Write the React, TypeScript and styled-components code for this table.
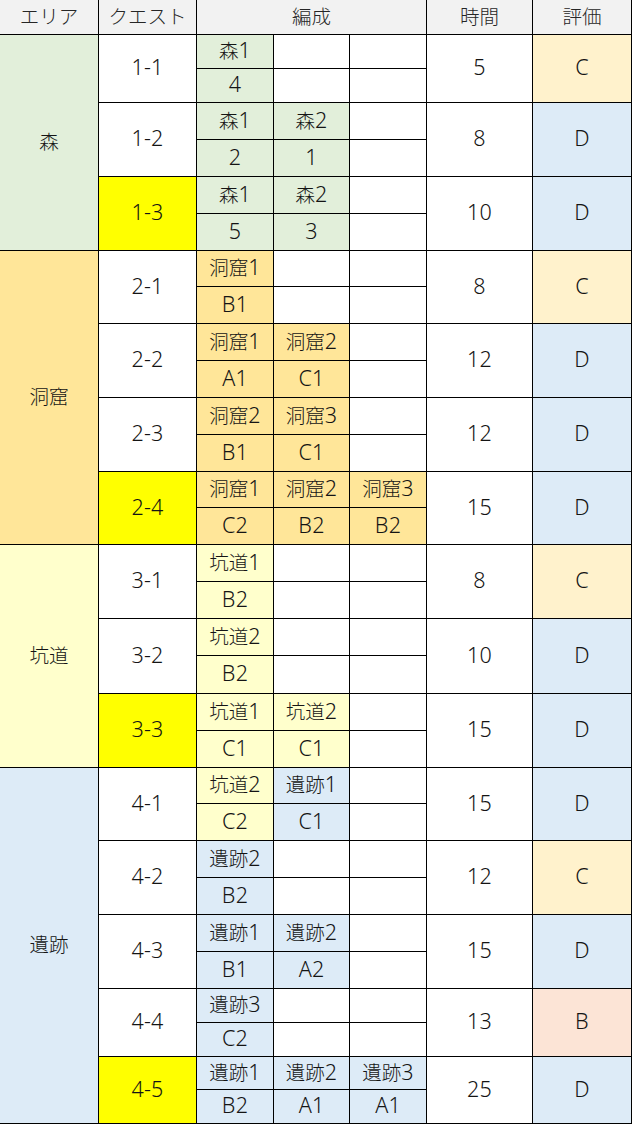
import React from "react";
import styled, { createGlobalStyle } from "styled-components";

const GlobalStyle = createGlobalStyle`
  html, body { margin: 0; padding: 0; background: #ffffff; }
  body { font-family: "Noto Sans CJK JP", "Noto Sans", sans-serif; }
`;

const COLORS = {
  header: "#f2f2f2",
  森: "#e2efda",
  洞窟: "#ffe699",
  坑道: "#ffffcc",
  遺跡: "#ddebf7",
  highlight: "#ffff00",
  white: "#ffffff",
  B: "#fce4d6",
  C: "#fff2cc",
  D: "#ddebf7",
} as const;

type AreaName = "森" | "洞窟" | "坑道" | "遺跡";
type Member = { name: string; value: string };
type Quest = {
  id: string;
  members: Member[];
  time: number;
  rating: "B" | "C" | "D";
  highlight?: boolean;
  heights: [number, number];
};
type Area = { name: AreaName; quests: Quest[] };

const m = (name: string, value: string): Member => ({ name, value });

const AREAS: Area[] = [
  {
    name: "森",
    quests: [
      { id: "1-1", members: [m("森1", "4")], time: 5, rating: "C", heights: [33, 33] },
      { id: "1-2", members: [m("森1", "2"), m("森2", "1")], time: 8, rating: "D", heights: [36, 36] },
      { id: "1-3", members: [m("森1", "5"), m("森2", "3")], time: 10, rating: "D", highlight: true, heights: [36, 36] },
    ],
  },
  {
    name: "洞窟",
    quests: [
      { id: "2-1", members: [m("洞窟1", "B1")], time: 8, rating: "C", heights: [35, 36] },
      { id: "2-2", members: [m("洞窟1", "A1"), m("洞窟2", "C1")], time: 12, rating: "D", heights: [36, 36] },
      { id: "2-3", members: [m("洞窟2", "B1"), m("洞窟3", "C1")], time: 12, rating: "D", heights: [36, 36] },
      {
        id: "2-4",
        members: [m("洞窟1", "C2"), m("洞窟2", "B2"), m("洞窟3", "B2")],
        time: 15,
        rating: "D",
        highlight: true,
        heights: [35, 36],
      },
    ],
  },
  {
    name: "坑道",
    quests: [
      { id: "3-1", members: [m("坑道1", "B2")], time: 8, rating: "C", heights: [36, 36] },
      { id: "3-2", members: [m("坑道2", "B2")], time: 10, rating: "D", heights: [36, 37] },
      { id: "3-3", members: [m("坑道1", "C1"), m("坑道2", "C1")], time: 15, rating: "D", highlight: true, heights: [36, 36] },
    ],
  },
  {
    name: "遺跡",
    quests: [
      { id: "4-1", members: [m("坑道2", "C2"), m("遺跡1", "C1")], time: 15, rating: "D", heights: [35, 36] },
      { id: "4-2", members: [m("遺跡2", "B2")], time: 12, rating: "C", heights: [36, 36] },
      { id: "4-3", members: [m("遺跡1", "B1"), m("遺跡2", "A2")], time: 15, rating: "D", heights: [36, 36] },
      { id: "4-4", members: [m("遺跡3", "C2")], time: 13, rating: "B", heights: [33, 33] },
      {
        id: "4-5",
        members: [m("遺跡1", "B2"), m("遺跡2", "A1"), m("遺跡3", "A1")],
        time: 25,
        rating: "D",
        highlight: true,
        heights: [32, 33],
      },
    ],
  },
];

const AREA_NAMES: AreaName[] = ["森", "洞窟", "坑道", "遺跡"];

const areaColor = (memberName: string): string => {
  const key = AREA_NAMES.find((k) => memberName.startsWith(k));
  return key ? COLORS[key] : COLORS.white;
};

const Sheet = styled.div<{ $rows: string }>`
  display: grid;
  grid-template-columns: 98px 97px 76px 75px 76px 105px 98px;
  grid-template-rows: ${(p) => p.$rows};
  gap: 1px;
  padding: 0 1px 1px 0;
  width: max-content;
  background: #000000;
  font-size: 19.5px;
  font-weight: 300;
  color: #141414;
`;

const Cell = styled.div<{
  $bg: string;
  $row: number;
  $rowSpan?: number;
  $col: number;
  $colSpan?: number;
}>`
  grid-row: ${(p) => p.$row} / span ${(p) => p.$rowSpan ?? 1};
  grid-column: ${(p) => p.$col} / span ${(p) => p.$colSpan ?? 1};
  background: ${(p) => p.$bg};
  display: flex;
  align-items: center;
  justify-content: center;
  padding-bottom: 3px;
  box-sizing: border-box;
  line-height: 1;
  white-space: nowrap;
`;

const HeaderCell = styled(Cell)`
  color: #262626;
`;

const Latin = styled.span`
  font-family: "Noto Sans", "Noto Sans CJK JP", sans-serif;
  font-size: 21.5px;
  font-weight: 300;
  letter-spacing: 0.2px;
`;

const renderText = (s: string): React.ReactNode =>
  s.split(/([A-Za-z0-9\-]+)/).map((part, i) =>
    /^[A-Za-z0-9\-]+$/.test(part) ? <Latin key={i}>{part}</Latin> : part
  );

export default function App() {
  const heights: number[] = [34];
  const cells: React.ReactNode[] = [];

  const headers: { label: string; col: number; span?: number }[] = [
    { label: "エリア", col: 1 },
    { label: "クエスト", col: 2 },
    { label: "編成", col: 3, span: 3 },
    { label: "時間", col: 6 },
    { label: "評価", col: 7 },
  ];
  headers.forEach((h) =>
    cells.push(
      <HeaderCell key={`h-${h.label}`} $bg={COLORS.header} $row={1} $col={h.col} $colSpan={h.span}>
        {h.label}
      </HeaderCell>
    )
  );

  let row = 2;
  AREAS.forEach((area) => {
    cells.push(
      <Cell key={`a-${area.name}`} $bg={COLORS[area.name]} $row={row} $rowSpan={area.quests.length * 2} $col={1}>
        {area.name}
      </Cell>
    );
    area.quests.forEach((q) => {
      heights.push(q.heights[0], q.heights[1]);
      cells.push(
        <Cell
          key={`q-${q.id}`}
          $bg={q.highlight ? COLORS.highlight : COLORS.white}
          $row={row}
          $rowSpan={2}
          $col={2}
        >
          {renderText(q.id)}
        </Cell>
      );
      for (let i = 0; i < 3; i++) {
        const mem = q.members[i];
        const bg = mem ? areaColor(mem.name) : COLORS.white;
        cells.push(
          <Cell key={`n-${q.id}-${i}`} $bg={bg} $row={row} $col={3 + i}>
            {mem ? renderText(mem.name) : ""}
          </Cell>
        );
        cells.push(
          <Cell key={`v-${q.id}-${i}`} $bg={bg} $row={row + 1} $col={3 + i}>
            {mem ? renderText(mem.value) : ""}
          </Cell>
        );
      }
      cells.push(
        <Cell key={`t-${q.id}`} $bg={COLORS.white} $row={row} $rowSpan={2} $col={6}>
          {renderText(String(q.time))}
        </Cell>
      );
      cells.push(
        <Cell key={`r-${q.id}`} $bg={COLORS[q.rating]} $row={row} $rowSpan={2} $col={7}>
          {renderText(q.rating)}
        </Cell>
      );
      row += 2;
    });
  });

  return (
    <>
      <GlobalStyle />
      <Sheet $rows={heights.map((h) => `${h}px`).join(" ")}>{cells}</Sheet>
    </>
  );
}
